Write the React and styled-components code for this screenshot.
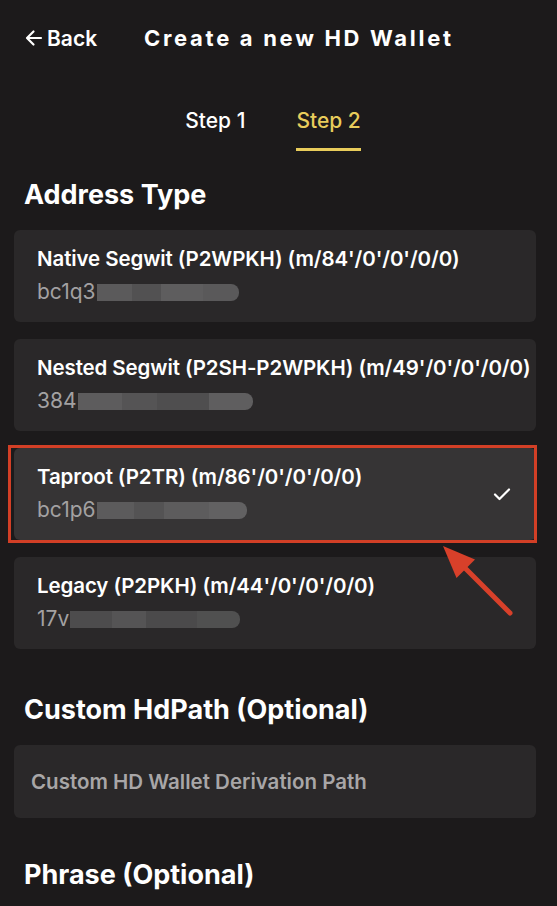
import styled, { createGlobalStyle } from "styled-components";

const GlobalStyle = createGlobalStyle`
    * { box-sizing: border-box; }
    body {
        margin: 0;
        background-color: #1c1a1b;
        font-family: 'Inter', 'Noto Sans', sans-serif;
        color: #ffffff;
    }
`

const addressTypes = [
    {
        title: "Native Segwit (P2WPKH) (m/84'/0'/0'/0/0)",
        prefix: "bc1q3",
        redact: 142,
        shades: ["#5b5a5b", "#525152", "#5e5d5e", "#5a595a"],
    },
    {
        title: "Nested Segwit (P2SH-P2WPKH) (m/49'/0'/0'/0/0)",
        prefix: "384",
        redact: 175,
        shades: ["#5d5c5d", "#555455", "#4f4e4f", "#5f5e5f"],
    },
    {
        title: "Taproot (P2TR) (m/86'/0'/0'/0/0)",
        prefix: "bc1p6",
        redact: 150,
        shades: ["#5c5b5c", "#545354", "#5d5c5d", "#626162"],
        selected: true,
    },
    {
        title: "Legacy (P2PKH) (m/44'/0'/0'/0/0)",
        prefix: "17v",
        redact: 170,
        shades: ["#4d4c4d", "#555455", "#4b4a4b", "#505050"],
    },
];

export default function App() {
    return (
        <Page>
            <GlobalStyle />
            <Header>
                <BackButton>
                    <svg width="20" height="20" viewBox="0 0 20 20" fill="none">
                        <path d="M17 10H3.5M9.5 3.5L3 10l6.5 6.5" stroke="#fff" strokeWidth="2.2" strokeLinecap="round" strokeLinejoin="round" />
                    </svg>
                    Back
                </BackButton>
                <Title>Create a new HD Wallet</Title>
            </Header>

            <Tabs>
                <Tab>Step 1</Tab>
                <Tab active>Step 2</Tab>
            </Tabs>

            <SectionTitle>Address Type</SectionTitle>
            <CardList>
                {addressTypes.map((item) => (
                    <Card key={item.title} selected={item.selected}>
                        <CardText>
                            <CardTitle>{item.title}</CardTitle>
                            <CardAddress>
                                {item.prefix}
                                <Redact
                                    style={{
                                        width: item.redact,
                                        background: `linear-gradient(90deg, ${item.shades[0]} 0 25%, ${item.shades[1]} 25% 45%, ${item.shades[2]} 45% 75%, ${item.shades[3]} 75% 100%)`,
                                    }}
                                />
                            </CardAddress>
                        </CardText>
                        {item.selected && (
                            <svg width="20" height="16" viewBox="0 0 20 16" fill="none">
                                <path d="M3 8.5l4.5 4.5L17 3.5" stroke="#fff" strokeWidth="2.2" strokeLinecap="round" strokeLinejoin="round" />
                            </svg>
                        )}
                        {item.selected && <Highlight />}
                    </Card>
                ))}
            </CardList>

            <Arrow width="84" height="80" viewBox="0 0 84 80" fill="none">
                <path d="M29 28L74 73" stroke="#d8402a" strokeWidth="5" strokeLinecap="round" />
                <path d="M7 6L39 19.5L20.5 38Z" fill="#d8402a" />
            </Arrow>

            <SectionTitle spaced>Custom HdPath (Optional)</SectionTitle>
            <PathInput placeholder="Custom HD Wallet Derivation Path" />

            <SectionTitle phrase>Phrase (Optional)</SectionTitle>
        </Page>
    )
}

const Page = styled.div`
    position: relative;
    width: 557px;
    height: 906px;
    overflow: hidden;
    background-color: #1c1a1b;
    padding: 0 21px 0 14px;
`
const Header = styled.div`
    height: 76px;
    display: flex;
    align-items: center;
    padding-left: 10px;
`
const BackButton = styled.div`
    display: flex;
    align-items: center;
    gap: 3px;
    font-size: 21px;
    font-weight: 600;
    width: 120px;
`
const Title = styled.div`
    font-size: 22px;
    font-weight: 700;
    letter-spacing: 2.7px;
    white-space: nowrap;
`
const Tabs = styled.div`
    display: flex;
    justify-content: center;
    gap: 51px;
    padding-right: 4px;
`
const Tab = styled.div`
    padding-top: 31px;
    padding-bottom: 13px;
    line-height: 28px;
    font-size: 21px;
    font-weight: 500;
    color: ${({ active }) => (active ? "#e8cc5b" : "#ffffff")};
    border-bottom: 3px solid ${({ active }) => (active ? "#e8cc5b" : "transparent")};
`
const SectionTitle = styled.h2`
    margin: ${({ spaced, phrase }) => (spaced ? "44px" : phrase ? "40px" : "27px")} 0 18px 10px;
    font-size: 27px;
    line-height: 34px;
    font-weight: 700;
`
const CardList = styled.div`
    display: flex;
    flex-direction: column;
    gap: 17px;
`
const Card = styled.div`
    position: relative;
    height: 92px;
    display: flex;
    align-items: center;
    justify-content: space-between;
    padding: 0 24px 0 23px;
    border-radius: 6px;
    background-color: ${({ selected }) => (selected ? "#363435" : "#2a2829")};
`
const CardText = styled.div`
    display: flex;
    flex-direction: column;
`
const CardTitle = styled.div`
    font-size: 20.5px;
    line-height: 28px;
    font-weight: 600;
    white-space: nowrap;
    letter-spacing: -0.1px;
`
const CardAddress = styled.div`
    margin-top: 4px;
    display: flex;
    align-items: center;
    font-size: 21px;
    line-height: 30px;
    color: #a3a1a2;
`
const Redact = styled.span`
    display: inline-block;
    height: 17px;
    margin-left: 1px;
    border-radius: 0 8px 8px 0;
    filter: blur(0.6px);
`
const Highlight = styled.div`
    position: absolute;
    top: -3px;
    bottom: -3px;
    left: -6px;
    right: -1px;
    border: 3px solid #d23f26;
    pointer-events: none;
`
const Arrow = styled.svg`
    position: absolute;
    left: 436px;
    top: 540px;
`
const PathInput = styled.input`
    display: block;
    width: 100%;
    height: 73px;
    border: none;
    outline: none;
    border-radius: 6px;
    background-color: #2a2829;
    padding: 0 17px;
    font-family: 'Inter', 'Noto Sans', sans-serif;
    font-size: 20.5px;
    font-weight: 600;
    color: #ffffff;
    &::placeholder {
        color: #a8a6a7;
    }
`
